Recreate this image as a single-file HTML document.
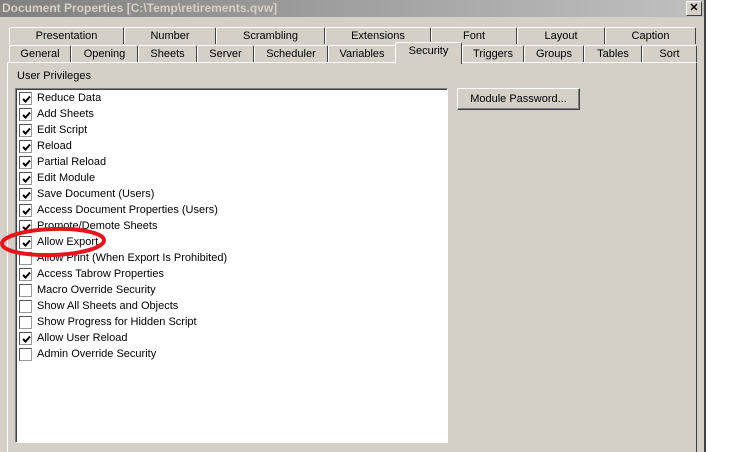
<!DOCTYPE html><html><head><style>
html,body{margin:0;width:750px;height:452px;overflow:hidden}
body{background:#fff;position:relative;font-family:"Liberation Sans",sans-serif;font-size:11px;color:#000}
.dlg{position:absolute;left:0;top:0;width:704px;height:452px;background:#d4d0c8;border-right:2px solid #404040;overflow:hidden}
.title{position:absolute;left:0;top:0;width:704px;height:17px;background:linear-gradient(90deg,#808080,#c0c0c0);color:#d4d0c8;font-weight:bold;font-size:12px;line-height:16px;padding-left:2px;box-sizing:border-box}
.x{position:absolute;left:686px;top:1px;width:14px;height:13px;background:#d4d0c8;border:1px solid;border-color:#fff #404040 #404040 #fff;font-size:11px;line-height:12px;text-align:center;font-weight:bold;color:#000}
.tab{position:absolute;height:17px;border:1px solid;border-color:#fff #404040 transparent #fff;border-bottom:none;border-radius:2px 2px 0 0;text-align:center;line-height:16px;box-sizing:border-box;background:#d4d0c8}
.panel{position:absolute;left:7px;top:62px;width:690px;height:400px;border:1px solid;border-color:#fff #404040 #404040 #fff;box-sizing:border-box}
.list{position:absolute;left:15px;top:88px;width:433px;height:355px;background:#fff;border:1px solid;border-color:#808080 #fff #fff #808080;box-sizing:border-box;box-shadow:inset 1px 1px 0 #404040}
.btn{position:absolute;left:457px;top:88px;width:123px;height:22px;border:1px solid;border-color:#fff #404040 #404040 #fff;box-sizing:border-box;text-align:center;line-height:20px;box-shadow:inset -1px -1px 0 #808080}
.row{position:absolute;left:19px;height:16px;line-height:16px;white-space:nowrap}
.cb{position:absolute;left:0;top:2px;width:13px;height:13px;box-sizing:border-box;border:1px solid #555;border-right-color:#999;border-bottom-color:#999;background:#fff}
.cb svg{position:absolute;left:1px;top:1px}
.row span{position:absolute;left:18px;top:0}
</style></head><body>
<div class="dlg">
<div class="title">Document Properties [C:\Temp\retirements.qvw]</div>
<div class="x">✕</div>
<div class="panel"></div>
<div class="tab" style="left:9px;top:27px;width:115px">Presentation</div>
<div class="tab" style="left:124px;top:27px;width:92px">Number</div>
<div class="tab" style="left:216px;top:27px;width:109px">Scrambling</div>
<div class="tab" style="left:325px;top:27px;width:106px">Extensions</div>
<div class="tab" style="left:431px;top:27px;width:86px">Font</div>
<div class="tab" style="left:517px;top:27px;width:88px">Layout</div>
<div class="tab" style="left:605px;top:27px;width:91px">Caption</div>
<div class="tab" style="left:9px;top:45px;width:62px">General</div>
<div class="tab" style="left:71px;top:45px;width:67px">Opening</div>
<div class="tab" style="left:138px;top:45px;width:59px">Sheets</div>
<div class="tab" style="left:197px;top:45px;width:57px">Server</div>
<div class="tab" style="left:254px;top:45px;width:74px">Scheduler</div>
<div class="tab" style="left:328px;top:45px;width:68px">Variables</div>
<div class="tab" style="left:462px;top:45px;width:62px">Triggers</div>
<div class="tab" style="left:524px;top:45px;width:60px">Groups</div>
<div class="tab" style="left:584px;top:45px;width:58px">Tables</div>
<div class="tab" style="left:642px;top:45px;width:55px">Sort</div>
<div class="tab" style="left:395px;top:42px;width:67px;height:22px;line-height:17px;z-index:2">Security</div>
<div style="position:absolute;left:17px;top:70px">User Privileges</div>
<div class="list"></div>
<div class="btn">Module Password...</div>
</div>
<div style="position:absolute;left:0;top:0">
<div class="row" style="top:90px"><div class="cb"><svg width="11" height="11"><path d="M2 5 L4.5 7.5 L9 2.5" fill="none" stroke="#000" stroke-width="2"/></svg></div><span>Reduce Data</span></div>
<div class="row" style="top:106px"><div class="cb"><svg width="11" height="11"><path d="M2 5 L4.5 7.5 L9 2.5" fill="none" stroke="#000" stroke-width="2"/></svg></div><span>Add Sheets</span></div>
<div class="row" style="top:122px"><div class="cb"><svg width="11" height="11"><path d="M2 5 L4.5 7.5 L9 2.5" fill="none" stroke="#000" stroke-width="2"/></svg></div><span>Edit Script</span></div>
<div class="row" style="top:138px"><div class="cb"><svg width="11" height="11"><path d="M2 5 L4.5 7.5 L9 2.5" fill="none" stroke="#000" stroke-width="2"/></svg></div><span>Reload</span></div>
<div class="row" style="top:154px"><div class="cb"><svg width="11" height="11"><path d="M2 5 L4.5 7.5 L9 2.5" fill="none" stroke="#000" stroke-width="2"/></svg></div><span>Partial Reload</span></div>
<div class="row" style="top:170px"><div class="cb"><svg width="11" height="11"><path d="M2 5 L4.5 7.5 L9 2.5" fill="none" stroke="#000" stroke-width="2"/></svg></div><span>Edit Module</span></div>
<div class="row" style="top:186px"><div class="cb"><svg width="11" height="11"><path d="M2 5 L4.5 7.5 L9 2.5" fill="none" stroke="#000" stroke-width="2"/></svg></div><span>Save Document (Users)</span></div>
<div class="row" style="top:202px"><div class="cb"><svg width="11" height="11"><path d="M2 5 L4.5 7.5 L9 2.5" fill="none" stroke="#000" stroke-width="2"/></svg></div><span>Access Document Properties (Users)</span></div>
<div class="row" style="top:218px"><div class="cb"><svg width="11" height="11"><path d="M2 5 L4.5 7.5 L9 2.5" fill="none" stroke="#000" stroke-width="2"/></svg></div><span>Promote/Demote Sheets</span></div>
<div class="row" style="top:234px"><div class="cb"><svg width="11" height="11"><path d="M2 5 L4.5 7.5 L9 2.5" fill="none" stroke="#000" stroke-width="2"/></svg></div><span>Allow Export</span></div>
<div class="row" style="top:250px"><div class="cb"></div><span>Allow Print (When Export Is Prohibited)</span></div>
<div class="row" style="top:266px"><div class="cb"><svg width="11" height="11"><path d="M2 5 L4.5 7.5 L9 2.5" fill="none" stroke="#000" stroke-width="2"/></svg></div><span>Access Tabrow Properties</span></div>
<div class="row" style="top:282px"><div class="cb"></div><span>Macro Override Security</span></div>
<div class="row" style="top:298px"><div class="cb"></div><span>Show All Sheets and Objects</span></div>
<div class="row" style="top:314px"><div class="cb"></div><span>Show Progress for Hidden Script</span></div>
<div class="row" style="top:330px"><div class="cb"><svg width="11" height="11"><path d="M2 5 L4.5 7.5 L9 2.5" fill="none" stroke="#000" stroke-width="2"/></svg></div><span>Allow User Reload</span></div>
<div class="row" style="top:346px"><div class="cb"></div><span>Admin Override Security</span></div>
</div>
<svg style="position:absolute;left:0;top:0" width="750" height="452"><ellipse cx="53" cy="242" rx="51" ry="13" fill="none" stroke="#e8141c" stroke-width="4" transform="rotate(-2 53 242)"/></svg>
</body></html>
